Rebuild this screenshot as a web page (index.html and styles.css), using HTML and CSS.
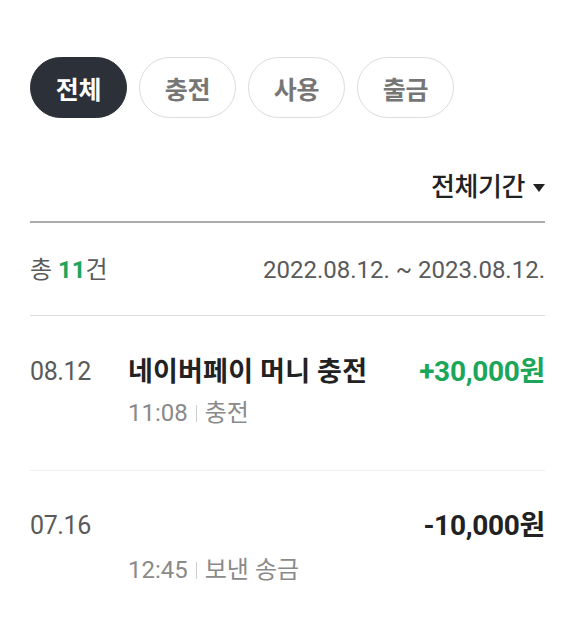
FILE: index.html
```html
<!DOCTYPE html>
<html lang="ko">
<head>
<meta charset="utf-8">
<link rel="stylesheet" href="styles.css">
</head>
<body>
<div class="page">
  <div class="tabs">
    <button class="pill active">전체</button>
    <button class="pill">충전</button>
    <button class="pill">사용</button>
    <button class="pill">출금</button>
  </div>
  <div class="period">
    <span class="period-label">전체기간</span>
    <svg class="caret" width="12" height="8" viewBox="0 0 12 8"><path d="M0 0H12L6 8Z" fill="#222"/></svg>
  </div>
  <div class="summary">
    <span class="count">총 <em>11</em>건</span>
    <span class="range">2022.08.12. ~ 2023.08.12.</span>
  </div>
  <ul class="list">
    <li class="item">
      <div class="date">08.12</div>
      <div class="body">
        <div class="title">네이버페이 머니 충전</div>
        <div class="meta">11:08<i class="bar"></i>충전</div>
      </div>
      <div class="amount plus">+30,000원</div>
    </li>
    <li class="item">
      <div class="date">07.16</div>
      <div class="body">
        <div class="title"></div>
        <div class="meta">12:45<i class="bar"></i>보낸 송금</div>
      </div>
      <div class="amount">-10,000원</div>
    </li>
  </ul>
</div>
</body>
</html>
```
FILE: styles.css
```css
* { box-sizing: border-box; }
html, body { margin: 0; padding: 0; background: #fff; }
body {
  font-family: Roboto, "Noto Sans CJK KR", sans-serif;
  color: #222;
}
.page {
  padding: 57px 36px 0 30px;
}
.tabs {
  display: flex;
  gap: 12px;
}
.pill {
  width: 97px;
  height: 61px;
  border: 1px solid #dcdcdc;
  border-radius: 31px;
  background: #fff;
  color: #767676;
  font-family: inherit;
  font-size: 25px;
  font-weight: 700;
  letter-spacing: -0.2px;
  display: flex;
  align-items: center;
  justify-content: center;
  padding: 0;
}
.pill.active {
  background: #2c3139;
  border-color: #2c3139;
  color: #fff;
}
.period {
  margin-top: 52px;
  padding-bottom: 17px;
  border-bottom: 2px solid #ababab;
  display: flex;
  justify-content: flex-end;
  align-items: center;
  gap: 8px;
  box-sizing: content-box;
  height: 34px;
}
.period-label {
  font-size: 26px;
  font-weight: 500;
  letter-spacing: -0.4px;
  line-height: 34px;
  color: #222;
}
.caret { margin-top: 2px; }
.summary {
  display: flex;
  justify-content: space-between;
  align-items: center;
  padding: 31px 0 29px;
  border-bottom: 1px solid #dddddd;
  line-height: 32px;
  font-size: 24px;
  color: #5a5a5a;
}
.count em {
  font-style: normal;
  font-weight: 700;
  color: #1ca65a;
}
.list {
  list-style: none;
  margin: 0;
  padding: 0;
}
.item {
  display: grid;
  grid-template-columns: 98px 1fr auto;
  align-items: start;
  padding: 40px 0 41px;
  border-bottom: 1px solid #efefef;
}
.item + .item { padding-top: 39px; border-bottom: none; }
.date {
  font-size: 25px;
  line-height: 32px;
  letter-spacing: -0.4px;
  color: #5a5a5a;
}
.title {
  font-size: 27px;
  line-height: 32px;
  font-weight: 700;
  letter-spacing: 0.2px;
  color: #222;
}
.title:empty { height: 35px; }
.meta {
  margin-top: 9px;
  font-size: 24px;
  line-height: 32px;
  color: #8a8a8a;
  display: flex;
  align-items: center;
}
.bar {
  display: inline-block;
  width: 1px;
  height: 17px;
  background: #cfcfcf;
  margin: 0 8px 0 8px;
}
.amount {
  font-size: 28px;
  line-height: 32px;
  font-weight: 700;
  letter-spacing: -0.3px;
  color: #222;
}
.amount.plus { color: #1ca65a; }
```
